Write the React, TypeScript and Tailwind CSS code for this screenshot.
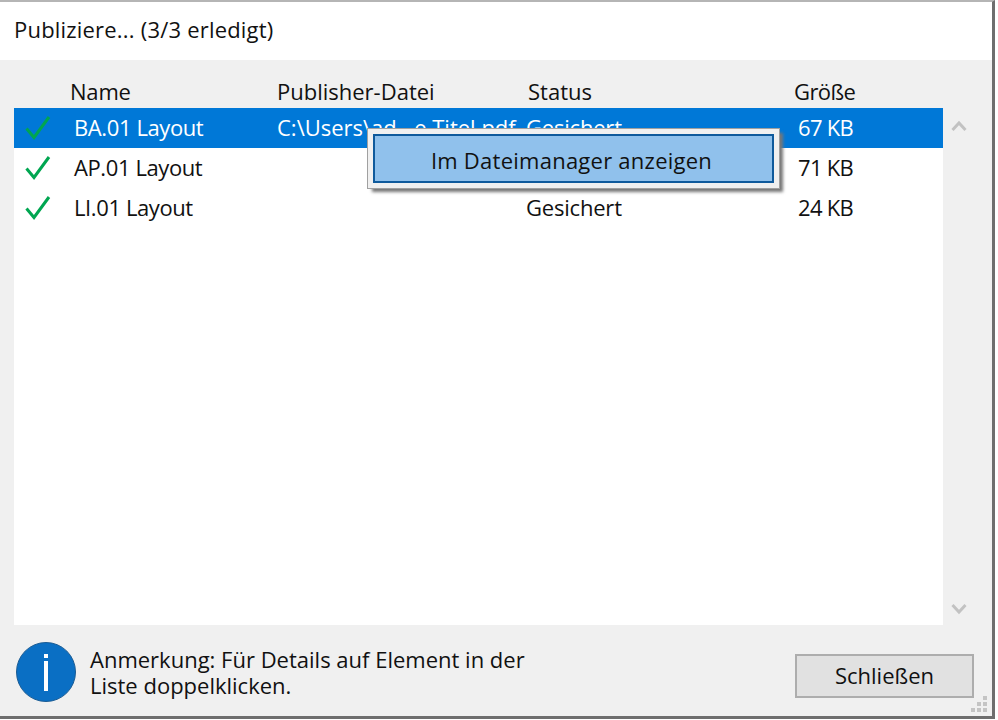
const rows = [
  { name: "BA.01 Layout", file: "C:\\Users\\ad...e Titel.pdf", status: "Gesichert", size: "67 KB", selected: true },
  { name: "AP.01 Layout", file: "", status: "Gesichert", size: "71 KB", selected: false },
  { name: "LI.01 Layout", file: "", status: "Gesichert", size: "24 KB", selected: false },
];

function Check() {
  return (
    <svg width="26" height="26" viewBox="0 0 26 26" fill="none" className="shrink-0">
      <path d="M1.5 13.5 L9 22.5 L24 2" stroke="#00a651" strokeWidth="3" />
    </svg>
  );
}

function Row({ row }: { row: (typeof rows)[number] }) {
  return (
    <div className={`flex h-10 items-center ${row.selected ? "bg-[#0078d7] text-white" : "text-[#111]"}`}>
      <div className="flex w-[60px] shrink-0 pl-[11px]">
        <Check />
      </div>
      <div className="w-[203px] shrink-0 pb-[2px] tracking-[-0.4px]">{row.name}</div>
      <div className="w-[249px] shrink-0 whitespace-nowrap pb-[2px]">{row.file}</div>
      <div className="w-[272px] shrink-0 pb-[2px] tracking-[-0.2px]">{row.status}</div>
      <div className="pb-[2px] tracking-[-0.7px]">{row.size}</div>
    </div>
  );
}

export default function App() {
  return (
    <div className="relative h-[720px] w-[998px] overflow-hidden bg-white font-['Open_Sans',sans-serif] text-[22px] text-[#111]">
      <div className="flex h-[719px] w-[995px] flex-col border-t-2 border-r-[3px] border-b-[3px] border-t-[#b5b5b5] border-r-[#6e6e6e] border-b-[#6e6e6e]">
        {/* title */}
        <div className="flex h-[58px] shrink-0 items-center pb-[4px] pl-[14px] tracking-[0.2px]">Publiziere... (3/3 erledigt)</div>

        <div className="flex min-h-0 flex-1 flex-col bg-[#f0f0f0] pl-[14px] pr-[17px]">
          <div className="flex min-h-0 flex-1">
            <div className="flex w-[929px] shrink-0 flex-col">
              {/* column headers */}
              <div className="flex h-[48px] shrink-0 items-center pt-[14px] text-[#111]">
                <div className="w-[263px] shrink-0 pl-[56px] tracking-[-0.2px]">Name</div>
                <div className="w-[251px] shrink-0">Publisher-Datei</div>
                <div className="w-[266px] shrink-0">Status</div>
                <div className="tracking-[-0.6px]">Größe</div>
              </div>
              <div className="min-h-0 flex-1 bg-white">
                {rows.map((row) => (
                  <Row key={row.name} row={row} />
                ))}
              </div>
            </div>
            {/* scrollbar */}
            <div className="flex w-[32px] flex-col items-center justify-between pt-[60px] pb-[10px]">
              <svg width="16" height="12" viewBox="0 0 16 12" fill="none">
                <path d="M1.5 10 L8 3 L14.5 10" stroke="#c2c2c2" strokeWidth="3" />
              </svg>
              <svg width="16" height="12" viewBox="0 0 16 12" fill="none">
                <path d="M1.5 2 L8 9 L14.5 2" stroke="#c2c2c2" strokeWidth="3" />
              </svg>
            </div>
          </div>

          {/* footer */}
          <div className="relative flex h-[91px] shrink-0 items-center">
            <svg width="60" height="60" viewBox="0 0 60 60" className="ml-[2px] mt-[3px] shrink-0">
              <circle cx="30" cy="30" r="29.5" fill="#0a6fc4" stroke="#1b5c94" />
              <rect x="28" y="19" width="4" height="30" fill="#fff" />
              <rect x="28" y="12" width="4" height="4" fill="#fff" />
            </svg>
            <div className="ml-[14px] mt-[3px] w-[470px] leading-[26px]">
              Anmerkung: Für Details auf Element in der
              <br />
              Liste doppelklicken.
            </div>
            <button className="ml-auto mr-[1px] mt-[11px] h-[44px] w-[179px] border-2 border-[#adadad] bg-[#e1e1e1] pb-[2px] text-[#111]">
              Schließen
            </button>
            {/* resize grip */}
            <svg width="18" height="18" viewBox="0 0 18 18" className="absolute right-[-14px] bottom-[2px]" fill="#c4c4c4">
              <rect x="12" y="0" width="4" height="4" />
              <rect x="6" y="6" width="4" height="4" />
              <rect x="12" y="6" width="4" height="4" />
              <rect x="0" y="12" width="4" height="4" />
              <rect x="6" y="12" width="4" height="4" />
              <rect x="12" y="12" width="4" height="4" />
            </svg>
          </div>
        </div>
      </div>

      {/* context menu */}
      <div className="absolute left-[368px] top-[129px] h-[59px] w-[411px] border-[5px] border-[#f0f0f0] shadow-[4px_4px_3px_#777] outline outline-1 outline-[#a0a0a0]">
        <div className="flex h-full items-center justify-center border-2 border-[#0f5a9c] bg-[#90c1ec] pr-[4px] pt-[3px] tracking-[0.25px] text-[#111]">
          Im Dateimanager anzeigen
        </div>
      </div>
    </div>
  );
}
